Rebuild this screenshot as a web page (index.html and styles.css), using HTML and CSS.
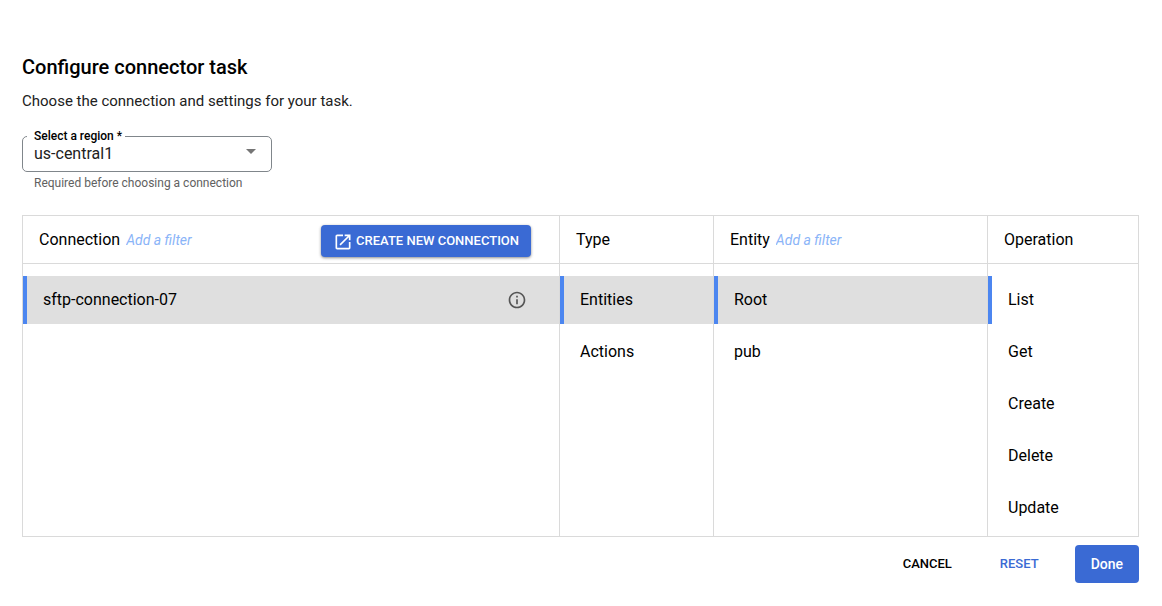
FILE: index.html
```html
<!DOCTYPE html>
<html lang="en">
<head>
<meta charset="utf-8">
<meta name="viewport" content="width=device-width, initial-scale=1">
<title>Configure connector task</title>
<link rel="stylesheet" href="styles.css">
</head>
<body>
<main class="page">
  <h1 class="title">Configure connector task</h1>
  <p class="subtitle">Choose the connection and settings for your task.</p>

  <fieldset class="field">
    <legend class="field-legend"><label for="region">Select a region *</label></legend>
    <div class="select-wrap">
      <select id="region" class="select" aria-describedby="region-hint">
        <option>us-central1</option>
      </select>
      <svg class="caret" viewBox="0 0 10 5" aria-hidden="true"><path d="M0 0h10L5 5z"/></svg>
    </div>
  </fieldset>
  <p class="hint" id="region-hint">Required before choosing a connection</p>

  <div class="picker">
    <section class="column">
      <header class="column-head">
        <h2 class="column-title">Connection</h2>
        <input class="filter" type="text" placeholder="Add a filter" aria-label="Filter connections">
        <button class="create" type="button">
          <svg class="create-icon" viewBox="0 0 24 24" aria-hidden="true"><path d="M19 19H5V5h7V3H5c-1.110 0-2 .9-2 2v14c0 1.100.890 2 2 2h14c1.100 0 2-.9 2-2v-7h-2v7zM14 3v2h3.590l-9.830 9.830 1.410 1.410L19 6.410V10h2V3h-7z"/></svg>
          CREATE NEW CONNECTION
        </button>
      </header>
      <div class="rows">
        <button class="row current filled" type="button">sftp-connection-07
          <svg class="info" viewBox="0 0 24 24" aria-hidden="true"><path d="M11 7h2v2h-2zm0 4h2v6h-2zm1-9C6.480 2 2 6.480 2 12s4.480 10 10 10 10-4.480 10-10S17.520 2 12 2zm0 18c-4.410 0-8-3.590-8-8s3.590-8 8-8 8 3.590 8 8-3.590 8-8 8z"/></svg>
        </button>
      </div>
    </section>
    <section class="column">
      <header class="column-head"><h2 class="column-title">Type</h2></header>
      <div class="rows">
        <button class="row current filled" type="button">Entities</button>
        <button class="row" type="button">Actions</button>
      </div>
    </section>
    <section class="column">
      <header class="column-head">
        <h2 class="column-title">Entity</h2>
        <input class="filter" type="text" placeholder="Add a filter" aria-label="Filter entities">
      </header>
      <div class="rows">
        <button class="row current filled" type="button">Root</button>
        <button class="row" type="button">pub</button>
      </div>
    </section>
    <section class="column">
      <header class="column-head"><h2 class="column-title">Operation</h2></header>
      <div class="rows">
        <button class="row current" type="button">List</button>
        <button class="row" type="button">Get</button>
        <button class="row" type="button">Create</button>
        <button class="row" type="button">Delete</button>
        <button class="row" type="button">Update</button>
      </div>
    </section>
  </div>

  <footer class="actions">
    <button class="text-button" type="button">CANCEL</button>
    <button class="text-button primary-text" type="button">RESET</button>
    <button class="done" type="button">Done</button>
  </footer>
</main>
</body>
</html>
```

FILE: styles.css
```css
* {
  box-sizing: border-box;
}

body {
  margin: 0;
  background: #fff;
  color: #000;
  font-family: Roboto, "Liberation Sans", sans-serif;
  font-size: 16px;
  line-height: 24px;
}

button,
input,
select {
  margin: 0;
  border: 0;
  background: none;
  color: inherit;
  font: inherit;
}

button {
  cursor: pointer;
}

.page {
  padding: 55px 23px 20px 22px;
}

.title {
  margin: 0;
  font-size: 20px;
  font-weight: 500;
  line-height: 24px;
}

.subtitle {
  margin: 12px 0 0;
  color: #212121;
  font-size: 15px;
  line-height: 20px;
}

.field {
  width: 250px;
  margin: 19px 0 0;
  padding: 0;
  border: 1px solid #80868b;
  border-radius: 5px;
}

.field-legend {
  margin-left: 4px;
  padding: 0 3px 0 7px;
  font-size: 12px;
  font-weight: 500;
  line-height: 12px;
}

.field-legend label {
  display: block;
}

.select-wrap {
  display: grid;
  align-items: center;
}

.select,
.caret {
  grid-area: 1 / 1;
}

.select {
  width: 100%;
  height: 29px;
  padding: 0 11px 5px;
  appearance: none;
  color: #212121;
  line-height: 24px;
}

.caret {
  justify-self: end;
  width: 10px;
  height: 5px;
  margin: 0 15px 10px 0;
  fill: #757575;
  pointer-events: none;
}

.hint {
  margin: 3px 0 0 12px;
  color: #616161;
  font-size: 12px;
  line-height: 16px;
}

.picker {
  display: grid;
  grid-template-columns: 537fr 154fr 274fr 151fr;
  margin-top: 24px;
  border: 1px solid #dadada;
  border-right: 0;
}

.column {
  min-width: 0;
  border-right: 1px solid #dadada;
}

.column-head {
  display: flex;
  align-items: center;
  height: 48px;
  padding: 0 16px;
  border-bottom: 1px solid #dadada;
}

.column-title {
  margin: 0;
  font-size: 16px;
  font-weight: 400;
}

.filter {
  flex: 0 1 120px;
  min-width: 0;
  height: 24px;
  margin-left: 6px;
  padding: 0;
  font-size: 14px;
  font-style: italic;
}

.filter::placeholder {
  color: #8ab4f8;
  opacity: 1;
}

.create {
  display: flex;
  align-items: center;
  gap: 3px;
  height: 32px;
  margin: 3px 12px 0 auto;
  padding: 0 12px;
  border-radius: 4px;
  background: #3a6ad4;
  box-shadow: 0 1px 3px rgba(0, 0, 0, 0.45);
  color: #fff;
  font-size: 13px;
  font-weight: 500;
  white-space: nowrap;
}

.create-icon {
  width: 20px;
  height: 20px;
  margin-top: 2px;
  fill: currentColor;
}

.rows {
  display: grid;
  gap: 4px;
  padding: 12px 0 4px;
}

.row {
  display: flex;
  align-items: center;
  justify-content: space-between;
  height: 48px;
  padding: 0 32px 0 16px;
  border-left: 4px solid transparent;
  text-align: left;
}

.current {
  border-left-color: #4c86f0;
}

.filled {
  background-color: #dfdfdf;
}

.info {
  width: 20px;
  height: 20px;
  fill: #555;
}

.actions {
  display: flex;
  justify-content: flex-end;
  align-items: center;
  margin-top: 8px;
}

.text-button {
  height: 36px;
  margin-right: 16px;
  padding: 0 16px;
  font-size: 13px;
  font-weight: 500;
}

.primary-text {
  margin-right: 20px;
  color: #3a6ad4;
}

.done {
  height: 38px;
  padding: 0 16px;
  border-radius: 4px;
  background: #3a6ad4;
  color: #fff;
  font-size: 14px;
  font-weight: 500;
}
```
